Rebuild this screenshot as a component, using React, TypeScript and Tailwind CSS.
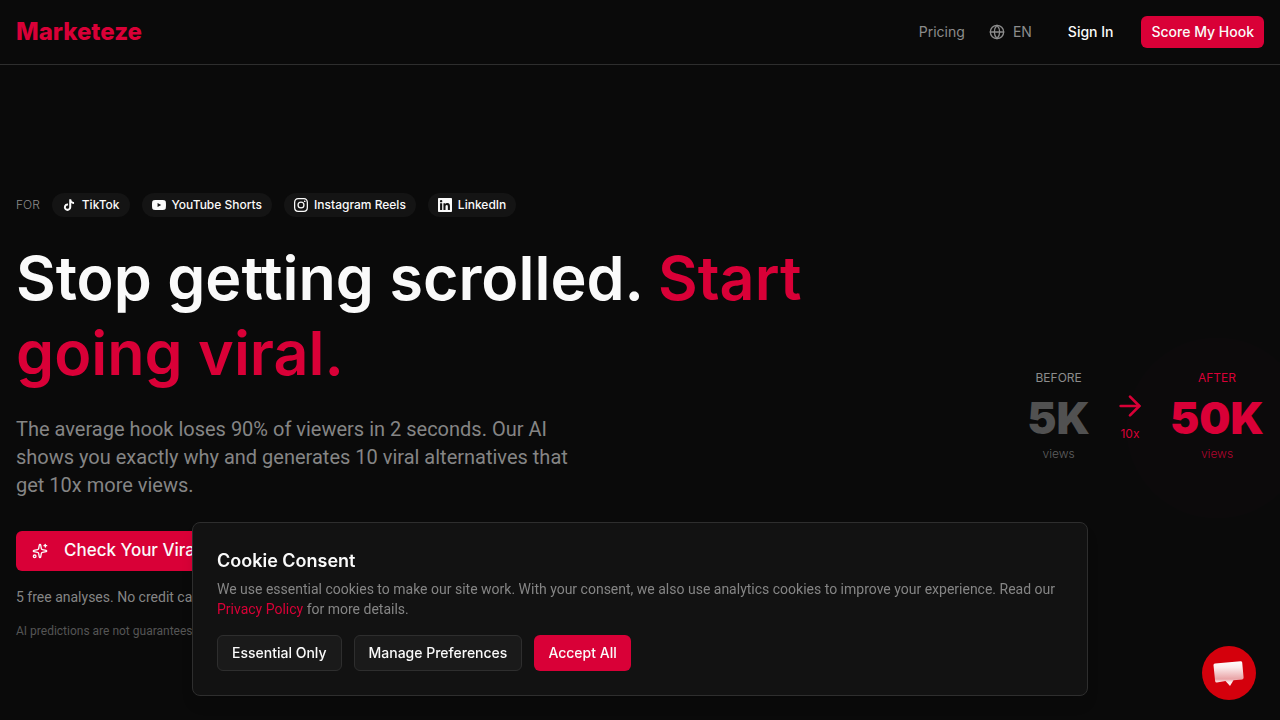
import React, { ReactNode } from 'react';
import { ArrowRight, Globe, Sparkles } from 'lucide-react';

interface Platform {
    name: string;
    path: string;
}

const PLATFORMS: Platform[] = [
    {
        name: 'TikTok',
        path: 'M19.59 6.69a4.83 4.83 0 0 1-3.77-4.25V2h-3.45v13.67a2.89 2.89 0 0 1-5.2 1.74 2.89 2.89 0 0 1 2.31-4.64 2.93 2.93 0 0 1 .88.13V9.4a6.84 6.84 0 0 0-1-.05A6.33 6.33 0 0 0 5 20.1a6.34 6.34 0 0 0 10.86-4.43v-7a8.16 8.16 0 0 0 4.77 1.52v-3.4a4.85 4.85 0 0 1-1-.1z',
    },
    {
        name: 'YouTube Shorts',
        path: 'M23.498 6.186a3.016 3.016 0 0 0-2.122-2.136C19.505 3.545 12 3.545 12 3.545s-7.505 0-9.377.505A3.017 3.017 0 0 0 .502 6.186C0 8.07 0 12 0 12s0 3.93.502 5.814a3.016 3.016 0 0 0 2.122 2.136c1.871.505 9.376.505 9.376.505s7.505 0 9.377-.505a3.015 3.015 0 0 0 2.122-2.136C24 15.93 24 12 24 12s0-3.93-.502-5.814zM9.545 15.568V8.432L15.818 12l-6.273 3.568z',
    },
    {
        name: 'Instagram Reels',
        path: 'M12 2.163c3.204 0 3.584.012 4.85.07 3.252.148 4.771 1.691 4.919 4.919.058 1.265.069 1.645.069 4.849 0 3.205-.012 3.584-.069 4.849-.149 3.225-1.664 4.771-4.919 4.919-1.266.058-1.644.07-4.85.07-3.204 0-3.584-.012-4.849-.07-3.26-.149-4.771-1.699-4.919-4.92-.058-1.265-.07-1.644-.07-4.849 0-3.204.013-3.583.07-4.849.149-3.227 1.664-4.771 4.919-4.919 1.266-.057 1.645-.069 4.849-.069zM12 0C8.741 0 8.333.014 7.053.072 2.695.272.273 2.69.073 7.052.014 8.333 0 8.741 0 12c0 3.259.014 3.668.072 4.948.2 4.358 2.618 6.78 6.98 6.98C8.333 23.986 8.741 24 12 24c3.259 0 3.668-.014 4.948-.072 4.354-.2 6.782-2.618 6.979-6.98.059-1.28.073-1.689.073-4.948 0-3.259-.014-3.667-.072-4.947-.196-4.354-2.617-6.78-6.979-6.98C15.668.014 15.259 0 12 0zm0 5.838a6.162 6.162 0 1 0 0 12.324 6.162 6.162 0 0 0 0-12.324zM12 16a4 4 0 1 1 0-8 4 4 0 0 1 0 8zm6.406-11.845a1.44 1.44 0 1 0 0 2.881 1.44 1.44 0 0 0 0-2.881z',
    },
    {
        name: 'LinkedIn',
        path: 'M20.447 20.452h-3.554v-5.569c0-1.328-.027-3.037-1.852-3.037-1.853 0-2.136 1.445-2.136 2.939v5.667H9.351V9h3.414v1.561h.046c.477-.9 1.637-1.85 3.37-1.85 3.601 0 4.267 2.37 4.267 5.455v6.286zM5.337 7.433a2.062 2.062 0 0 1-2.063-2.065 2.064 2.064 0 1 1 2.063 2.065zm1.782 13.019H3.555V9h3.564v11.452zM22.225 0H1.771C.792 0 0 .774 0 1.729v20.542C0 23.227.792 24 1.771 24h20.451C23.2 24 24 23.227 24 22.271V1.729C24 .774 23.2 0 22.222 0h.003z',
    },
];

function Header() {
    return (
        <header className="flex h-[65px] items-center justify-between border-b border-[#2e2e2e] px-4">
            <a href="#" className="text-2xl font-extrabold text-[#d90037]">
                Marketeze
            </a>
            <nav className="flex items-center gap-4 text-sm">
                <a href="#pricing" className="text-[#8c8c8c]">
                    Pricing
                </a>
                <button type="button" className="flex items-center gap-2 px-2 text-[#8c8c8c]">
                    <Globe className="h-4 w-4" />
                    EN
                </button>
                <a href="#sign-in" className="px-3 font-medium text-[#fafafa]">
                    Sign In
                </a>
                <button type="button" className="h-8 rounded-md bg-[#d90037] px-2.5 font-medium text-[#fafafa]">
                    Score My Hook
                </button>
            </nav>
        </header>
    );
}

function PlatformList() {
    return (
        <div className="flex items-center gap-3 text-xs">
            <span className="font-light text-[#8c8c8c]">FOR</span>
            {PLATFORMS.map(({ name, path }) => (
                <span
                    key={name}
                    className="flex h-6 items-center gap-1.5 rounded-full bg-[#141414] px-2.5 font-medium text-[#fafafa]"
                >
                    <svg viewBox="0 0 24 24" fill="currentColor" className="h-3.5 w-3.5">
                        <path d={path} />
                    </svg>
                    {name}
                </span>
            ))}
        </div>
    );
}

interface StatProps {
    label: string;
    value: string;
    labelClass: string;
    valueClass: string;
    unitClass: string;
    children?: ReactNode;
}

function Stat({ label, value, labelClass, valueClass, unitClass, children }: StatProps) {
    return (
        <div className="relative text-center">
            {children}
            <div className={`relative text-xs ${labelClass}`}>{label}</div>
            <div className={`relative mt-2 text-[44px] leading-12 font-black ${valueClass}`}>{value}</div>
            <div className={`relative mt-1 text-xs font-light ${unitClass}`}>views</div>
        </div>
    );
}

function Comparison() {
    return (
        <div className="flex shrink-0 items-center gap-6">
            <Stat
                label="BEFORE"
                value="5K"
                labelClass="text-[#8c8c8c]"
                valueClass="text-[#515151]"
                unitClass="text-[#5f5f5f]"
            />
            <div className="flex flex-col items-center gap-1 text-[#d90037]">
                <ArrowRight className="h-8 w-8" />
                <span className="text-xs">10x</span>
            </div>
            <Stat
                label="AFTER"
                value="50K"
                labelClass="text-[#d90037]"
                valueClass="text-[#d90037]"
                unitClass="text-[#b0042f]"
            >
                {/* Soft glow behind the winning number */}
                <div className="absolute -top-8 left-1/2 h-45 w-45 -translate-x-1/2 rounded-full bg-[#d90037]/1" />
            </Stat>
        </div>
    );
}

function Hero() {
    return (
        <main className="flex items-center justify-between overflow-hidden px-4 pt-32 pb-20">
            <div className="max-w-4xl">
                <PlatformList />
                <h1 className="mt-6 text-[61px] leading-[75px] font-semibold text-[#fafafa]">
                    Stop getting scrolled. <span className="text-[#d90037]">Start going viral.</span>
                </h1>
                <p className="mt-6 max-w-xl font-['Roboto',sans-serif] text-xl leading-7 text-[#858585]">
                    The average hook loses 90% of viewers in 2 seconds. Our AI shows you exactly why and
                    generates 10 viral alternatives that get 10x more views.
                </p>
                <button
                    type="button"
                    className="mt-8 flex h-10 items-center gap-4 rounded-md bg-[#d90037] px-4 text-[17px] font-medium text-[#fafafa]"
                >
                    <Sparkles className="h-4 w-4" />
                    Check Your Viral Score
                </button>
                <p className="mt-4 font-['Roboto',sans-serif] text-sm text-[#858585]">
                    5 free analyses. No credit card required.
                </p>
                <p className="mt-4 font-['Roboto',sans-serif] text-xs text-[#555555]">
                    AI predictions are not guarantees of performance.
                </p>
            </div>
            <Comparison />
        </main>
    );
}

function CookieConsent() {
    return (
        <section
            aria-label="Cookie Consent"
            className="fixed inset-x-6 bottom-6 mx-auto max-w-4xl rounded-lg border border-[#2e2e2e] bg-[#121212] p-6 shadow-lg"
        >
            <h2 className="text-lg leading-7 font-semibold text-[#fafafa]">Cookie Consent</h2>
            <p className="mt-1 font-['Roboto',sans-serif] text-sm text-[#858585]">
                We use essential cookies to make our site work. With your consent, we also use analytics
                cookies to improve your experience. Read our{' '}
                <a href="#privacy" className="text-[#d90037]">
                    Privacy Policy
                </a>{' '}
                for more details.
            </p>
            <div className="mt-4 flex gap-3 text-sm font-medium text-[#fafafa]">
                <button type="button" className="h-9 rounded-md border border-[#2e2e2e] bg-[#1a1a1a] px-3.5">
                    Essential Only
                </button>
                <button type="button" className="h-9 rounded-md border border-[#2e2e2e] bg-[#1a1a1a] px-3.5">
                    Manage Preferences
                </button>
                <button type="button" className="h-9 rounded-md bg-[#d90037] px-3.5">
                    Accept All
                </button>
            </div>
        </section>
    );
}

function ChatButton() {
    return (
        <button
            type="button"
            aria-label="Open chat"
            className="fixed right-6 bottom-5 flex h-[54px] w-[54px] items-center justify-center rounded-full bg-[#d4000c]"
        >
            <svg viewBox="0 0 54 54" className="h-full w-full">
                <defs>
                    <linearGradient id="bubble" x1="0" y1="0" x2="0" y2="1">
                        <stop offset="0" stopColor="#ffffff" />
                        <stop offset="0.25" stopColor="#fbecec" />
                        <stop offset="0.72" stopColor="#e9a3a6" />
                        <stop offset="0.85" stopColor="#fbe9e9" />
                    </linearGradient>
                </defs>
                <path
                    d="M13 17.5 38.5 15.2Q40 15.1 40.2 16.6L41.6 31.6Q41.7 33.2 40.2 33.5L31.5 34.3 28 40 23.5 35.1 14.8 36.4Q13.3 36.4 13.1 34.9L11.5 19.3Q11.4 17.7 13 17.5Z"
                    fill="url(#bubble)"
                />
            </svg>
        </button>
    );
}

export default function App() {
    return (
        <div className="min-h-screen bg-[#0a0a0a] font-['Inter',sans-serif]">
            <Header />
            <Hero />
            <CookieConsent />
            <ChatButton />
        </div>
    );
}
